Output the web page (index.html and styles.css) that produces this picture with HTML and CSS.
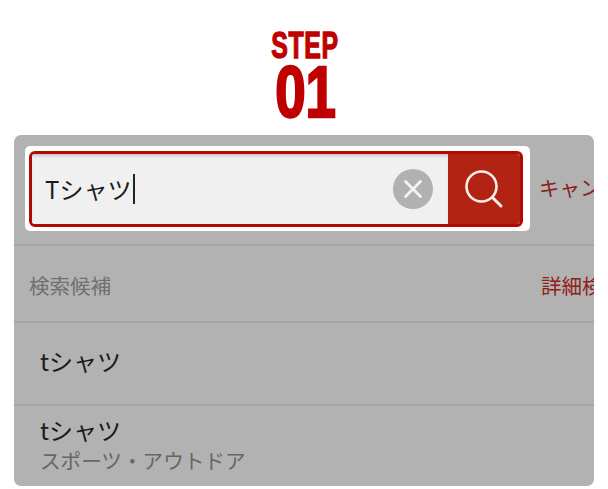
FILE: index.html
```html
<!DOCTYPE html>
<html lang="ja">
<head>
<meta charset="utf-8">
<title>STEP 01</title>
<link rel="stylesheet" href="styles.css">
</head>
<body>
<header class="step">
  <div class="step-label">STEP</div>
  <div class="step-num">01</div>
</header>
<main class="panel">
  <div class="search-row">
    <div class="highlight">
      <div class="search">
        <div class="field">
          <span class="query">Tシャツ</span><span class="caret"></span>
          <span class="clear">
            <svg viewBox="0 0 40 40" width="40" height="40"><circle cx="20" cy="20" r="20" fill="#b1b1b1"/><path d="M12.500 12.500L27.500 27.500M27.500 12.500L12.500 27.500" stroke="#f4f4f4" stroke-width="2.800" stroke-linecap="round"/></svg>
          </span>
        </div>
        <div class="go">
          <svg viewBox="0 0 40 40" width="40" height="40"><circle cx="17.500" cy="17.500" r="15" fill="none" stroke="#fbeeea" stroke-width="2.600"/><path d="M28.500 28.500L37 37" stroke="#fbeeea" stroke-width="3" stroke-linecap="round"/></svg>
        </div>
      </div>
    </div>
    <span class="cancel">キャンセル</span>
  </div>
  <div class="row head">
    <span class="head-title">検索候補</span>
    <span class="head-link">詳細検索</span>
  </div>
  <div class="row item"><span class="item-name">tシャツ</span></div>
  <div class="row item last">
    <span class="item-name">tシャツ</span>
    <span class="item-sub">スポーツ・アウトドア</span>
  </div>
</main>
</body>
</html>
```
FILE: styles.css
```css
* { box-sizing: border-box; }
html, body { margin: 0; padding: 0; }
body {
  width: 608px;
  height: 489px;
  overflow: hidden;
  background: #fff;
  font-family: "Noto Sans CJK JP", "Noto Sans", sans-serif;
}
.step {
  height: 135px;
  padding: 31px 0 0 3px;
  display: flex;
  flex-direction: column;
  align-items: center;
  color: #bf0000;
  font-family: "Liberation Sans", sans-serif;
  font-weight: 700;
  -webkit-text-stroke: 1.300px #bf0000;
}
.step-label {
  font-size: 36px;
  line-height: 30px;
  height: 30px;
  letter-spacing: 1px;
  transform: scaleX(0.69);
}
.step-num {
  margin-top: 2px;
  font-size: 73px;
  line-height: 58px;
  -webkit-text-stroke-width: 2.400px;
  transform: scaleX(0.75);
}
.panel {
  margin-left: 14px;
  width: 580px;
  height: 351px;
  background: #b2b2b2;
  border-radius: 7px;
  overflow: hidden;
}
.search-row {
  height: 111px;
  padding: 11px 0 0 11px;
  display: flex;
  align-items: flex-start;
  border-bottom: 2px solid #a6a6a6;
}
.highlight {
  flex: none;
  width: 505px;
  height: 85px;
  padding: 5px 7px 4px 4px;
  background: #fff;
  border-radius: 5px;
}
.search {
  height: 76px;
  display: flex;
  border: 3px solid #b20a02;
  border-radius: 6px;
  overflow: hidden;
}
.field {
  flex: 1;
  display: flex;
  align-items: center;
  padding-left: 13px;
  background: #f0f0f0;
  box-shadow: inset 0 3px 3px -1px #c6c6c6;
}
.query {
  font-size: 24px;
  line-height: 30px;
  color: #1c1c1c;
}
.caret {
  width: 2px;
  height: 30px;
  margin-left: 2px;
  background: #222;
}
.clear {
  margin-left: auto;
  margin-right: 15px;
  display: flex;
}
.go {
  flex: none;
  width: 72px;
  background: #b32314;
  display: flex;
  align-items: center;
  justify-content: center;
}
.cancel {
  margin-left: 9px;
  margin-top: 26px;
  font-size: 20.500px;
  line-height: 30px;
  color: #8f2018;
  white-space: nowrap;
}
.row {
  padding: 0 15px;
  border-bottom: 2px solid #a6a6a6;
}
.head {
  height: 77px;
  padding-top: 3px;
  display: flex;
  align-items: center;
  justify-content: space-between;
  padding-right: 0;
  white-space: nowrap;
}
.head-title {
  font-size: 20.500px;
  color: #6f6f6f;
}
.head-link {
  font-size: 20.500px;
  color: #8f2018;
  margin-right: -29px;
}
.item {
  height: 83px;
  padding-left: 26px;
  padding-bottom: 5px;
  display: flex;
  flex-direction: column;
  justify-content: center;
}
.item.last {
  border-bottom: 0;
  height: 80px;
  justify-content: flex-start;
  padding-top: 7px;
  padding-bottom: 0;
}
.item-name {
  font-size: 24px;
  line-height: 34px;
  color: #1a1a1a;
}
.item-sub {
  font-size: 20.600px;
  line-height: 26px;
  color: #666;
}
```
